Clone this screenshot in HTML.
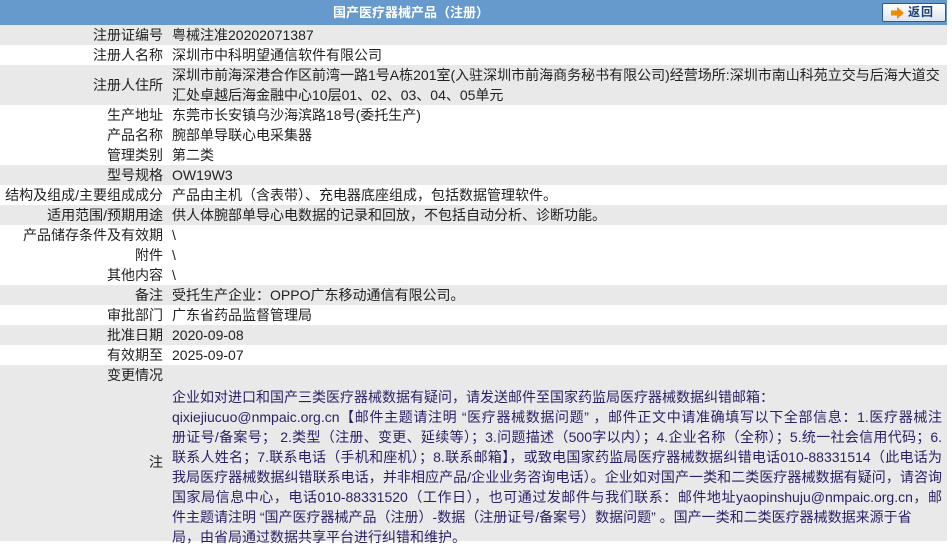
<!DOCTYPE html>
<html><head><meta charset="utf-8"><style>
*{margin:0;padding:0;box-sizing:border-box}
body{width:952px;height:541px;overflow:hidden;background:#fff;font-family:"Liberation Sans","Noto Sans CJK SC",sans-serif;font-size:14px;color:#222}
.hd{position:absolute;left:0;top:0;width:947px;height:25px;background:#6699cc;}
.hd .t{position:absolute;left:333px;top:0;line-height:25px;color:#fff;font-weight:bold;font-size:13px;white-space:nowrap}
.btn{position:absolute;left:882px;top:3px;width:64px;height:19px;border:1px solid #2d5a8c;border-radius:2px;background:linear-gradient(#fff,#dde6ee);}
.btn .txt{position:absolute;left:25px;top:0;line-height:17px;font-size:12px;font-weight:bold;color:#1a3f7a;letter-spacing:1px}
.row{position:absolute;left:0;width:947px;}
.g{background:#e9e9e9}
.l{position:absolute;left:0;width:163px;text-align:right;white-space:nowrap;line-height:20px}
.v{position:absolute;left:172px;white-space:nowrap;line-height:20px}
.n{color:#2a1f66}
.n div{height:20px;white-space:nowrap}
.n .j{width:770px;text-align:justify;text-align-last:justify}
</style></head><body>
<div class="hd"><div class="t">国产医疗器械产品（注册）</div>
<div class="btn"><svg style="position:absolute;left:8px;top:3px" width="14" height="12" viewBox="0 0 14 12"><path d="M0 3.5H6V0L13 6L6 12V8.5H0Z" fill="#f08a00"/></svg><div class="txt">返回</div></div></div>

<div class="row g" style="top:25px;height:20px"><div class="l">注册证编号</div><div class="v">粤械注准20202071387</div></div>
<div class="row" style="top:45px;height:20px"><div class="l">注册人名称</div><div class="v">深圳市中科明望通信软件有限公司</div></div>
<div class="row g" style="top:65px;height:40px"><div class="l" style="top:10px">注册人住所</div><div class="v">深圳市前海深港合作区前湾一路1号A栋201室(入驻深圳市前海商务秘书有限公司)经营场所:深圳市南山科苑立交与后海大道交<br>汇处卓越后海金融中心10层01、02、03、04、05单元</div></div>
<div class="row" style="top:105px;height:20px"><div class="l">生产地址</div><div class="v">东莞市长安镇乌沙海滨路18号(委托生产)</div></div>
<div class="row" style="top:125px;height:20px"><div class="l">产品名称</div><div class="v">腕部单导联心电采集器</div></div>
<div class="row" style="top:145px;height:20px"><div class="l">管理类别</div><div class="v">第二类</div></div>
<div class="row g" style="top:165px;height:20px"><div class="l">型号规格</div><div class="v">OW19W3</div></div>
<div class="row" style="top:185px;height:20px"><div class="l">结构及组成/主要组成成分</div><div class="v">产品由主机（含表带）、充电器底座组成，包括数据管理软件。</div></div>
<div class="row g" style="top:205px;height:20px"><div class="l">适用范围/预期用途</div><div class="v">供人体腕部单导心电数据的记录和回放，不包括自动分析、诊断功能。</div></div>
<div class="row" style="top:225px;height:20px"><div class="l">产品储存条件及有效期</div><div class="v">\</div></div>
<div class="row" style="top:245px;height:20px"><div class="l">附件</div><div class="v">\</div></div>
<div class="row" style="top:265px;height:20px"><div class="l">其他内容</div><div class="v">\</div></div>
<div class="row g" style="top:285px;height:20px"><div class="l">备注</div><div class="v">受托生产企业：OPPO广东移动通信有限公司。</div></div>
<div class="row" style="top:305px;height:20px"><div class="l">审批部门</div><div class="v">广东省药品监督管理局</div></div>
<div class="row g" style="top:325px;height:20px"><div class="l">批准日期</div><div class="v">2020-09-08</div></div>
<div class="row" style="top:345px;height:20px"><div class="l">有效期至</div><div class="v">2025-09-07</div></div>
<div class="row g" style="top:365px;height:176px"><div class="l">变更情况</div>
<div class="l" style="top:87px">注</div>
<div class="v n" style="top:22px">
<div>企业如对进口和国产三类医疗器械数据有疑问，请发送邮件至国家药监局医疗器械数据纠错邮箱：</div>
<div class="j">qixiejiucuo@nmpaic.org.cn【邮件主题请注明 “医疗器械数据问题” ，邮件正文中请准确填写以下全部信息：1.医疗器械注</div>
<div class="j">册证号/备案号； 2.类型（注册、变更、延续等）；3.问题描述（500字以内）；4.企业名称（全称）；5.统一社会信用代码；6.</div>
<div class="j">联系人姓名；7.联系电话（手机和座机）；8.联系邮箱】，或致电国家药监局医疗器械数据纠错电话010-88331514（此电话为</div>
<div class="j">我局医疗器械数据纠错联系电话，并非相应产品/企业业务咨询电话）。企业如对国产一类和二类医疗器械数据有疑问，请咨询</div>
<div class="j">国家局信息中心，电话010-88331520（工作日），也可通过发邮件与我们联系：邮件地址yaopinshuju@nmpaic.org.cn，邮</div>
<div style="width:738px;text-align:justify;text-align-last:justify">件主题请注明 “国产医疗器械产品（注册）-数据（注册证号/备案号）数据问题” 。国产一类和二类医疗器械数据来源于省</div>
<div>局，由省局通过数据共享平台进行纠错和维护。</div>
</div></div>
</body></html>
